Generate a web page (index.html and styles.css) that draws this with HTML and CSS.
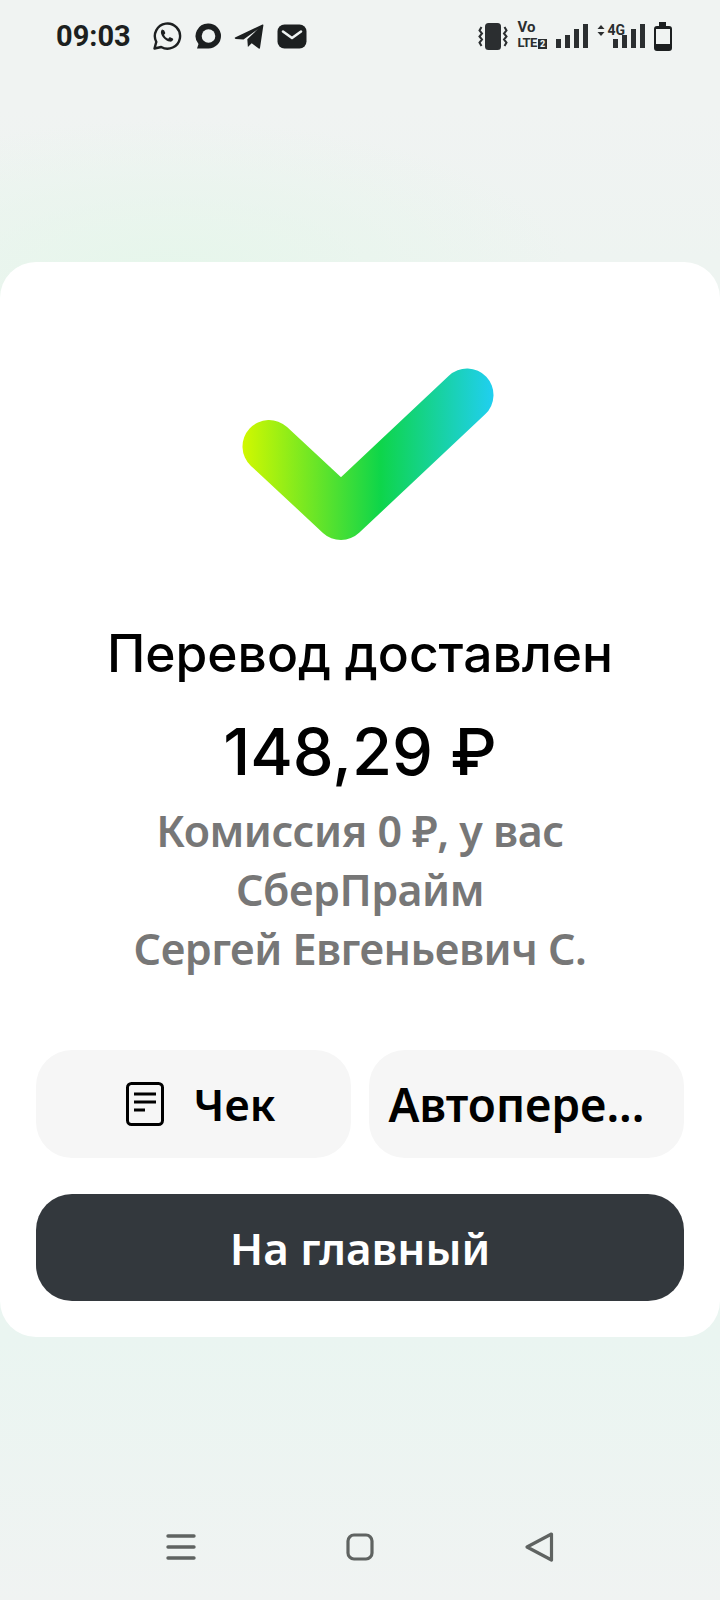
FILE: index.html
```html
<!DOCTYPE html>
<html lang="ru">
<head>
    <meta charset="UTF-8">
    <meta name="viewport" content="width=device-width, initial-scale=1.0">
    <title>Перевод доставлен</title>
    <link rel="stylesheet" href="styles.css">
</head>
<body>
    <!-- STATUS BAR -->
    <div class="status-bar">
        <div class="status-left">
            <span class="time">09:03</span>
            <svg class="app-icon whatsapp" width="30" height="30" viewBox="0 0 30 30">
                <path d="M2.5 27.5l1.8-6.6A12.6 12.6 0 1 1 9.2 26z" fill="none" stroke="#1c1f20" stroke-width="2.4" stroke-linejoin="round"/>
                <path d="M10.6 8.2c-1.2.6-2 2.2-1.6 4 .8 3.4 4.6 7.6 8.6 8.4 1.8.3 3.2-.6 3.6-2 .1-.5 0-.8-.4-1l-2.6-1.3c-.4-.2-.7-.1-1 .2l-1 1.2c-2-.8-3.4-2.2-4.2-4l1-1c.3-.3.3-.6.2-1l-1-2.3c-.3-.6-.9-.7-1.6-.2z" fill="#1c1f20"/>
            </svg>
            <svg class="app-icon msg" width="26" height="26" viewBox="0 0 26 26">
                <path d="M13.500.5a12.500 12.500 0 0 1 0 25H2l1.500-4.500A12.500 12.500 0 0 1 13.500.5z" fill="#1c1f20"/>
                <circle cx="13.500" cy="13" r="6.800" fill="#eff3f2"/>
            </svg>
            <svg class="app-icon" width="30" height="28" viewBox="0 0 30 28">
                <path d="M1 15.5L28.5 2.5c.7-.3 1 .1.9.8L26 26c-.1.8-.7 1-1.3.5l-7-5.2-3.8 3.6-.6-7.6L24 7 9.500 17.600l-7.800-.7c-1-.2-1.300-.9-.7-1.400z" fill="#1c1f20"/>
            </svg>
            <svg class="app-icon" width="30" height="25" viewBox="0 0 30 25">
                <rect x="0.500" y="0.500" width="29" height="24" rx="7" fill="#1c1f20"/>
                <path d="M6 7.500l9 6.500 9-6.500" fill="none" stroke="#eff3f2" stroke-width="2.600" stroke-linecap="round" stroke-linejoin="round"/>
            </svg>
        </div>
        <div class="status-right">
            <svg width="30" height="30" viewBox="0 0 30 30">
                <rect x="7" y="2" width="16" height="27" rx="3.500" fill="#2b2e30"/>
                <path d="M3.500 6L1.500 9.500l2.500 3-2.500 3 2.500 3-2.500 3L3.500 25M26.500 6l2 3.500-2.500 3 2.500 3-2.500 3 2.500 3-2 3.500" fill="none" stroke="#2b2e30" stroke-width="2"/>
            </svg>
            <div class="volte">
                <span class="volte-top">Vo</span>
                <span class="volte-bottom">LTE<b class="sim">2</b></span>
            </div>
            <div class="signal">
                <i class="bar h1"></i><i class="bar h2"></i><i class="bar h3"></i><i class="bar h4"></i>
            </div>
            <div class="data-signal">
                <div class="data-label">
                    <svg width="8" height="11" viewBox="0 0 8 11">
                        <path d="M4 0l3.500 4h-7zM4 11L.5 7h7z" fill="#2b2e30"/>
                    </svg>
                    <span>4G</span>
                </div>
                <div class="signal">
                    <i class="bar h1"></i><i class="bar h2"></i><i class="bar h3"></i><i class="bar h4"></i>
                </div>
            </div>
            <div class="battery"><div class="battery-level"></div></div>
        </div>
    </div>

    <!-- RESULT CARD -->
    <div class="card">
        <svg class="check" width="280" height="172" viewBox="0 0 280 172">
            <defs>
                <linearGradient id="checkFill" gradientUnits="userSpaceOnUse" x1="23" y1="0" x2="273" y2="0">
                    <stop offset="0" stop-color="#d0f800"/>
                    <stop offset="0.55" stop-color="#0ed54a"/>
                    <stop offset="1" stop-color="#20cff0"/>
                </linearGradient>
            </defs>
            <path d="M49 78.500L121 145.500L247 27" fill="none" stroke="url(#checkFill)" stroke-width="53" stroke-linecap="round" stroke-linejoin="round"/>
        </svg>
        <h1 class="title">Перевод доставлен</h1>
        <div class="amount">148,29 ₽</div>
        <p class="details">Комиссия 0 ₽, у вас<br>СберПрайм<br>Сергей Евгеньевич С.</p>
        <div class="chips">
            <button class="chip chip-receipt">
                <svg width="38" height="44" viewBox="0 0 38 44">
                    <rect x="1.500" y="1.500" width="35" height="41" rx="4" fill="none" stroke="#000" stroke-width="3"/>
                    <path d="M8 12h22M8 20h22M8 28h11" stroke="#000" stroke-width="3"/>
                </svg>
                <span>Чек</span>
            </button>
            <button class="chip"><span class="chip-text">Автопере...</span></button>
        </div>
        <button class="main-button">На главный</button>
    </div>

    <!-- NAVIGATION -->
    <div class="nav-bar">
        <svg width="30" height="28" viewBox="0 0 30 28">
            <path d="M2 3h26M2 14h26M2 25h26" stroke="#5f6361" stroke-width="3.400" stroke-linecap="round"/>
        </svg>
        <svg width="28" height="28" viewBox="0 0 28 28">
            <rect x="2" y="2" width="24" height="24" rx="6" fill="none" stroke="#5f6361" stroke-width="3.200"/>
        </svg>
        <svg width="30" height="32" viewBox="0 0 30 32">
            <path d="M27.500 3L3 16l24.500 13z" fill="none" stroke="#5f6361" stroke-width="3.200" stroke-linejoin="round"/>
        </svg>
    </div>
</body>
</html>
```

FILE: styles.css
```css
/* === GENERAL === */
body {
    margin: 0;
    width: 720px;
    height: 1600px;
    display: flex;
    flex-direction: column;
    font-family: "Noto Sans", sans-serif;
    background:
        radial-gradient(ellipse 400px 150px at 170px 270px, #e6f6eb, rgba(230, 246, 235, 0)),
        linear-gradient(180deg, #f0f3f2 0, #f0f3f2 110px, #eef4f1 262px, #eaf5f1 1340px, #f0f3f2 1600px);
    overflow: hidden;
}

/* === STATUS BAR === */
.status-bar {
    height: 72px;
    padding: 0 48px 0 56px;
    display: flex;
    align-items: center;
    justify-content: space-between;
    color: #1c1f20;
}

.status-left {
    display: flex;
    align-items: center;
}

.time {
    font-family: Roboto, sans-serif;
    font-weight: 700;
    font-size: 29px;
    margin-right: 21px;
}

.app-icon {
    margin-right: 13px;
}

.status-right {
    display: flex;
    align-items: center;
    gap: 9px;
}

.volte {
    display: flex;
    flex-direction: column;
    font-family: Roboto, sans-serif;
    font-weight: 700;
    color: #2b2e30;
    width: 30px;
}

.volte-top {
    font-size: 15px;
    line-height: 15px;
}

.volte-bottom {
    font-size: 13px;
    line-height: 15px;
    letter-spacing: -0.5px;
    white-space: nowrap;
}

.sim {
    font-size: 9px;
    color: #eff3f2;
    background-color: #2b2e30;
    padding: 0 2px;
    margin-left: 1px;
}

.signal {
    display: flex;
    align-items: flex-end;
    gap: 4px;
    height: 24px;
}

.bar {
    width: 5px;
    background-color: #2b2e30;
}

.h1 { height: 9px; }
.h2 { height: 13px; }
.h3 { height: 19px; }
.h4 { height: 24px; }

.data-signal {
    display: flex;
    align-items: flex-start;
}

.data-signal .signal {
    margin-left: -12px;
}

.data-label {
    display: flex;
    align-items: center;
    gap: 2px;
    height: 12px;
    font-family: Roboto, sans-serif;
    font-weight: 700;
    font-size: 14px;
    color: #2b2e30;
}

.battery {
    width: 18px;
    height: 25px;
    margin-top: 4px;
    border: 2.5px solid #1c1f20;
    border-top-width: 3px;
    border-radius: 3px;
    box-sizing: border-box;
    display: flex;
    align-items: flex-end;
    position: relative;
}

.battery::before {
    content: "";
    position: absolute;
    top: -7px;
    left: 3px;
    width: 7px;
    height: 4px;
    background-color: #1c1f20;
}

.battery-level {
    width: 100%;
    height: 5px;
    background-color: #1c1f20;
}

/* === CARD === */
.card {
    margin-top: 190px;
    height: 1075px;
    box-sizing: border-box;
    background-color: white;
    border-radius: 36px;
    padding: 106px 36px 36px;
    display: flex;
    flex-direction: column;
    align-items: center;
}

.check {
    flex-shrink: 0;
}

.title {
    margin: 79px 0 0;
    font-family: Inter, sans-serif;
    font-size: 51.500px;
    line-height: 68px;
    font-weight: 500;
    color: black;
}

.amount {
    margin-top: 23px;
    font-family: Inter, sans-serif;
    font-size: 65px;
    line-height: 84px;
    font-weight: 500;
    color: black;
}

.details {
    margin: 7px 0 0;
    font-size: 43px;
    line-height: 59px;
    font-weight: 600;
    letter-spacing: -0.5px;
    color: #777;
    text-align: center;
}

.chips {
    margin-top: 72px;
    width: 100%;
    display: flex;
    gap: 18px;
}

.chip {
    flex: 1 1 0;
    min-width: 0;
    height: 108px;
    border: none;
    border-radius: 36px;
    background-color: #f6f6f6;
    color: black;
    display: flex;
    align-items: center;
    justify-content: center;
    gap: 30px;
    font-family: inherit;
    font-size: 44px;
    font-weight: 600;
    padding: 0;
}

.chip-receipt svg {
    margin-left: 14px;
}

.chip-text {
    font-size: 46px;
    margin-right: 20px;
}

.main-button {
    margin-top: 36px;
    width: 100%;
    height: 108px;
    border: none;
    border-radius: 36px;
    background-color: #33383d;
    color: white;
    font-family: inherit;
    font-size: 44px;
    font-weight: 600;
}

/* === NAVIGATION === */
.nav-bar {
    margin-top: 194px;
    padding: 0 166px;
    display: flex;
    align-items: center;
    justify-content: space-between;
}
```
